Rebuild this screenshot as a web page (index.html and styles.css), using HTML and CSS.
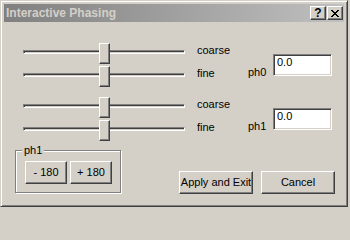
FILE: index.html
```html
<!DOCTYPE html>
<html>
<head>
<meta charset="utf-8">
<link rel="stylesheet" href="styles.css">
</head>
<body>
<div class="window">
  <div class="titlebar">
    <span class="title">Interactive Phasing</span>
    <span class="tbtns">
      <span class="tbtn help">?</span>
      <span class="tbtn close"><svg width="8" height="7" viewBox="0 0 8 7"><path d="M0 0h2v1h-2zM6 0h2v1h-2zM1 1h2v1h-2zM5 1h2v1h-2zM2 2h4v1h-4zM3 3h2v1h-2zM2 4h4v1h-4zM1 5h2v1h-2zM5 5h2v1h-2zM0 6h2v1h-2zM6 6h2v1h-2z" fill="#000"/></svg></span>
    </span>
  </div>
  <div class="client">
    <div class="phase">
      <div class="sliders">
        <div class="row"><div class="slider"><div class="track"></div><div class="thumb"></div></div><span class="lbl">coarse</span></div>
        <div class="row"><div class="slider"><div class="track"></div><div class="thumb"></div></div><span class="lbl">fine</span></div>
      </div>
      <span class="phlbl">ph0</span>
      <input class="edit" type="text" value="0.0">
    </div>
    <div class="phase">
      <div class="sliders">
        <div class="row"><div class="slider"><div class="track"></div><div class="thumb"></div></div><span class="lbl">coarse</span></div>
        <div class="row"><div class="slider"><div class="track"></div><div class="thumb"></div></div><span class="lbl">fine</span></div>
      </div>
      <span class="phlbl">ph1</span>
      <input class="edit" type="text" value="0.0">
    </div>
    <div class="bottom">
      <div class="group">
        <span class="legend">ph1</span>
        <div class="gbtns">
          <button class="btn small">- 180</button>
          <button class="btn small">+ 180</button>
        </div>
      </div>
      <div class="actions">
        <button class="btn wide">Apply and Exit</button>
        <button class="btn wide">Cancel</button>
      </div>
    </div>
  </div>
</div>
</body>
</html>
```

FILE: styles.css
```css
* { box-sizing: border-box; }
body {
  margin: 0;
  background: #d4d0c8;
  font: 11px "Liberation Sans", Arial, sans-serif;
  color: #000;
}
.window {
  width: 348px;
  height: 207px;
  border: 1px solid;
  border-color: #d4d0c8 #404040 #404040 #d4d0c8;
  box-shadow: inset 1px 1px #fff, inset -1px -1px #808080;
  padding: 3px;
  background: #d4d0c8;
}
.titlebar {
  height: 18px;
  display: flex;
  align-items: center;
  justify-content: space-between;
  background: linear-gradient(to right, #808080, #c0c0c0);
  padding: 0 1px 0 2px;
}
.title {
  font-weight: bold;
  font-size: 12px;
  line-height: 14px;
  color: #d4d0c8;
}
.tbtns { display: flex; gap: 1px; }
.tbtn {
  width: 16px;
  height: 14px;
  border: 1px solid;
  border-color: #fff #404040 #404040 #fff;
  box-shadow: inset -1px -1px #808080;
  background: #d4d0c8;
  display: flex;
  align-items: center;
  justify-content: center;
}
.help {
  font-weight: bold;
  font-size: 12px;
  line-height: 12px;
  padding-bottom: 1px;
}
.close svg { display: block; shape-rendering: crispEdges; }
.client { padding-top: 21px; }
.phase {
  display: flex;
  align-items: flex-start;
  padding-left: 19px;
}
.phase + .phase { margin-top: 10px; }
.sliders { display: flex; flex-direction: column; gap: 2px; }
.row { display: flex; align-items: flex-start; }
.slider { position: relative; width: 162px; height: 21px; }
.track {
  margin-top: 7px;
  height: 4px;
  border: 1px solid;
  border-color: #808080 #fff #fff #808080;
  box-shadow: inset 1px 1px #404040;
}
.thumb {
  position: absolute;
  left: 76px;
  top: 0;
  width: 11px;
  height: 21px;
  border: 1px solid;
  border-color: #fff #404040 #404040 #fff;
  box-shadow: inset -1px -1px #808080;
  background: #d4d0c8;
}
.lbl { margin-left: 12px; width: 51px; line-height: 13px; margin-top: 1px; }
.phlbl { width: 25px; line-height: 13px; margin-top: 23px; }
.edit {
  width: 59px;
  height: 22px;
  margin: 11px 0 0 0;
  border: 1px solid;
  border-color: #808080 #fff #fff #808080;
  box-shadow: inset 1px 1px #404040, inset -1px -1px #d4d0c8;
  padding: 0 0 6px 3px;
  font: inherit;
  color: #000;
  background: #fff;
  outline: none;
}
.bottom {
  display: flex;
  align-items: flex-start;
  padding-left: 11px;
  margin-top: 3px;
}
.group {
  position: relative;
  margin-top: 6px;
  width: 106px;
  height: 43px;
  border: 1px solid #808080;
  box-shadow: 1px 1px #fff, inset 1px 1px #fff;
  padding: 10px 0 0 9px;
}
.legend {
  position: absolute;
  top: -7px;
  left: 6px;
  padding: 0 2px;
  line-height: 13px;
  background: #d4d0c8;
}
.gbtns { display: flex; gap: 3px; }
.btn {
  font: inherit;
  color: #000;
  background: #d4d0c8;
  border: 1px solid;
  border-color: #fff #404040 #404040 #fff;
  box-shadow: inset -1px -1px #808080;
  padding: 0;
  height: 23px;
  line-height: 13px;
}
.small { width: 42px; }
.actions { display: flex; gap: 8px; margin: 27px 0 0 58px; }
.wide { width: 74px; }
```
